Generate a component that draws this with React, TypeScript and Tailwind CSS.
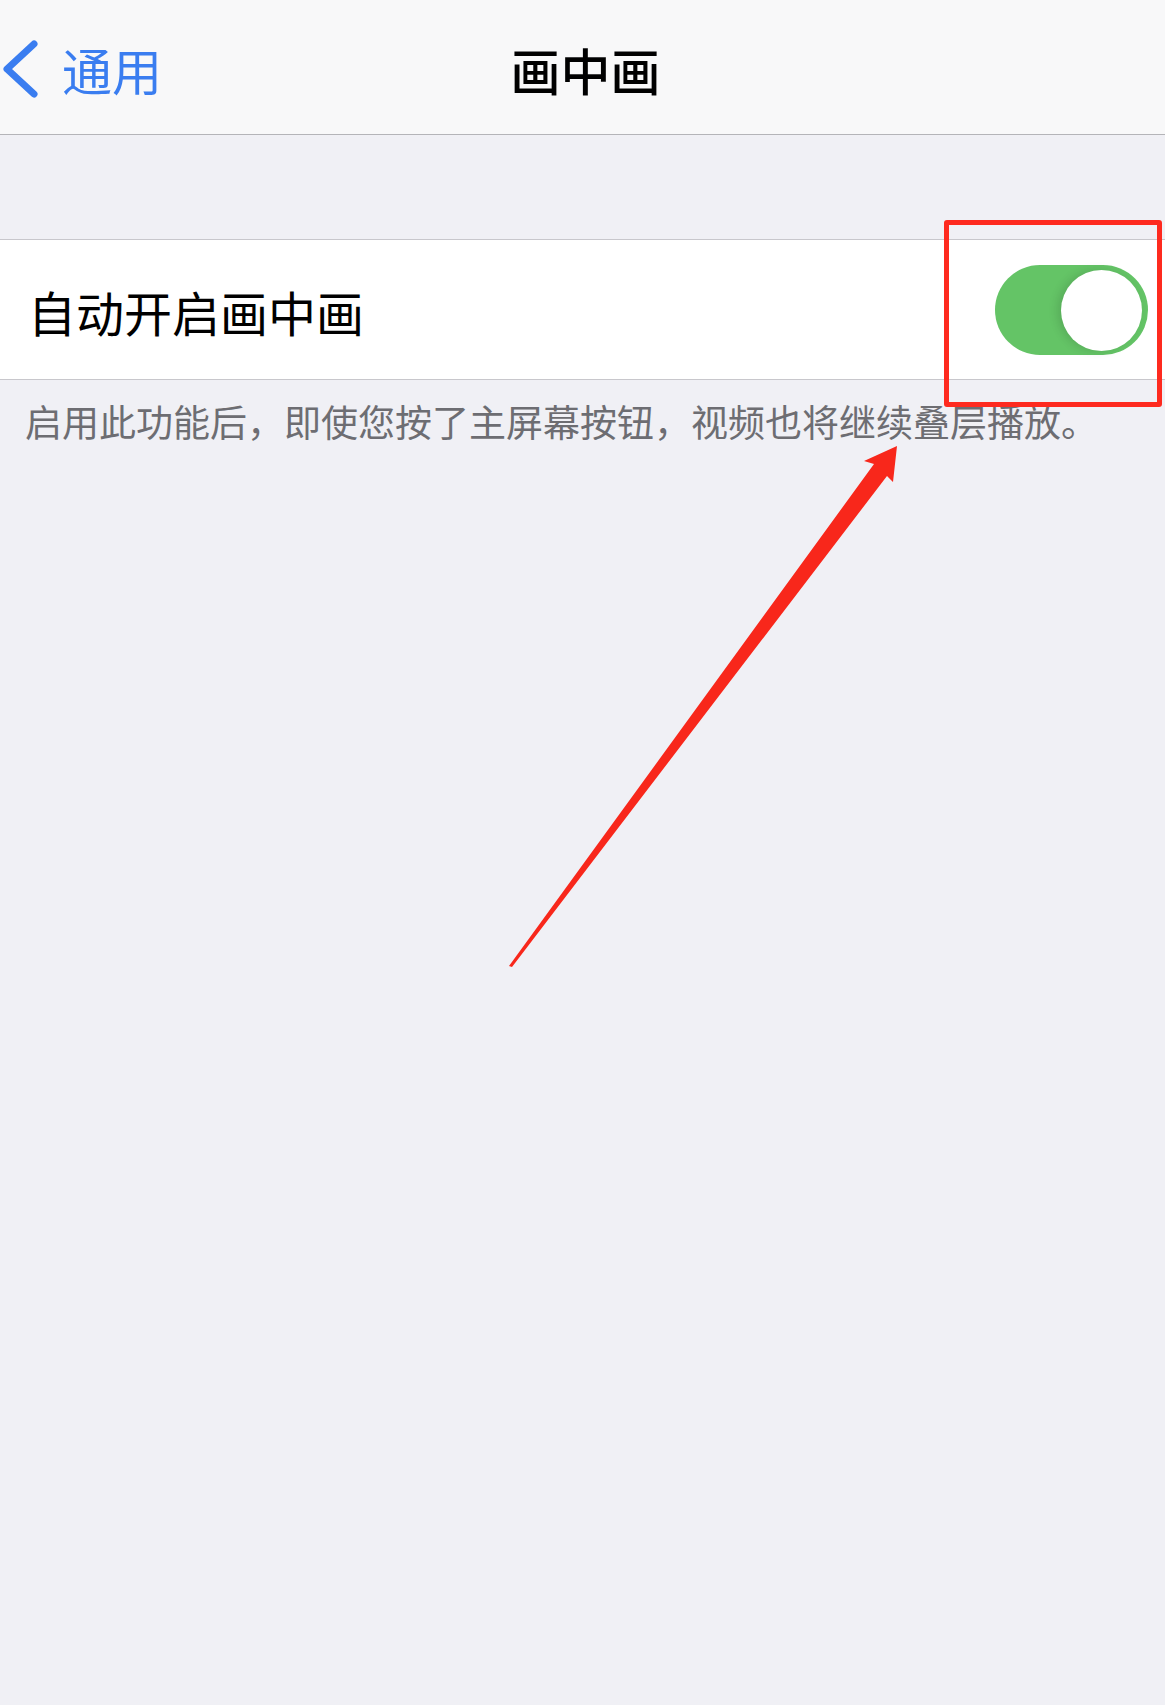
import { useState } from "react";

const CJK = { fontFamily: '"Noto Sans CJK SC", "Noto Sans", sans-serif' };

function BackChevron() {
  return (
    <svg width="40" height="60" viewBox="0 0 40 60" className="shrink-0">
      <polyline
        points="31,5 4,30 31,55"
        fill="none"
        stroke="#3a7df0"
        strokeWidth="7"
        strokeLinecap="round"
        strokeLinejoin="round"
      />
    </svg>
  );
}

function Toggle({ on, onChange }: { on: boolean; onChange: () => void }) {
  return (
    <button
      onClick={onChange}
      className={`relative w-[153px] h-[90px] rounded-full transition-colors ${
        on ? "bg-[#64c466]" : "bg-[#e9e9eb]"
      }`}
    >
      <span
        className={`absolute top-[5px] w-[81px] h-[81px] rounded-full bg-white shadow-[-4px_0_10px_rgba(0,0,0,0.12)] transition-all ${
          on ? "left-[66px]" : "left-[5px]"
        }`}
      />
    </button>
  );
}

export default function App() {
  const [autoPip, setAutoPip] = useState(true);

  return (
    <div className="relative w-full min-h-[1705px] bg-[#f0f0f5]" style={CJK}>
      {/* Nav bar */}
      <header className="grid grid-cols-[1fr_auto_1fr] items-center h-[135px] bg-[#f8f8f9] border-b border-[#b4b4b8] pt-[4px]">
        <div className="flex items-center gap-[19px] pl-[3px]">
          <BackChevron />
          <span className="text-[50px] leading-none text-[#3a7df0]">通用</span>
        </div>
        <h1 className="text-[50px] leading-none font-medium text-black pl-[6px]">画中画</h1>
        <div />
      </header>

      {/* Setting row */}
      <div className="mt-[104px] bg-white border-y border-[#c8c7cc] h-[141px] flex items-center justify-between pl-[28px] pr-[17px]">
        <span className="text-[48px] leading-none text-black pt-[2px]">自动开启画中画</span>
        <Toggle on={autoPip} onChange={() => setAutoPip(!autoPip)} />
      </div>
      <p className="mt-[19px] pl-[25px] text-[37px] leading-[44px] text-[#6d6d72] whitespace-nowrap">
        启用此功能后，即使您按了主屏幕按钮，视频也将继续叠层播放。
      </p>

      {/* Annotation: box round the switch and pointer arrow */}
      <div className="absolute left-[944px] top-[220px] w-[218px] h-[187px] border-[5px] border-[#fe2a1f] rounded-[3px]" />
      <svg
        className="absolute left-0 top-0 pointer-events-none"
        width="1165"
        height="1000"
        viewBox="0 0 1165 1000"
      >
        <polygon
          points="509,966 874,464 864,461 897,446 893,482 887,476 512,967"
          fill="#f8271b"
        />
      </svg>
    </div>
  );
}
